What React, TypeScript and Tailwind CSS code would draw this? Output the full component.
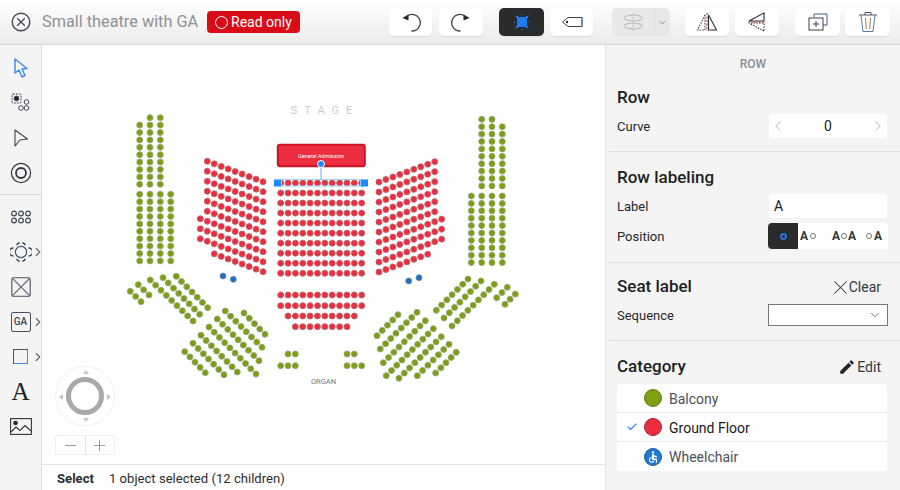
import React from 'react';
import { MdAccessible, MdEdit } from 'react-icons/md';
import { ChevronDown, ChevronLeft, ChevronRight, Check, X } from 'lucide-react';

type Pt = [number, number];

// straight line of seats between two points
const line = (x1: number, y1: number, x2: number, y2: number, n: number): Pt[] =>
  Array.from({ length: n }, (_, i) => [
    x1 + ((x2 - x1) * i) / Math.max(n - 1, 1),
    y1 + ((y2 - y1) * i) / Math.max(n - 1, 1),
  ]);

const column = (x: number, y: number, n: number) => line(x, y, x, y + 7.4 * (n - 1), n);

const greenSeats: Pt[] = [
  // left balcony
  ...column(139.7, 125.1, 9),
  ...column(150, 117.7, 10),
  ...column(160.3, 117.7, 10),
  ...column(139.7, 194.3, 10),
  ...column(150, 194.3, 10),
  ...column(160.3, 194.3, 10),
  ...column(170.7, 194.3, 10),
  // right balcony
  ...column(481.7, 119.3, 10),
  ...column(492, 119.3, 10),
  ...column(502.3, 126.7, 9),
  ...column(471.3, 196, 10),
  ...column(481.7, 196, 10),
  ...column(492, 196, 10),
  ...column(502.3, 196, 10),
  // left fan
  ...line(130.3, 291.3, 141, 301.7, 3),
  ...line(138.3, 284.7, 149, 295, 3),
  ...line(150.3, 280, 193, 321, 9),
  ...line(163, 277.7, 199.7, 314.3, 8),
  ...line(176.3, 276.3, 207.7, 307.7, 7),
  ...line(225.3, 311, 262, 347.3, 8),
  ...line(244, 313, 265, 334.3, 5),
  ...line(217.3, 319, 259, 360.7, 9),
  ...line(209, 327, 256, 374, 10),
  ...line(201, 335.3, 237.3, 372, 8),
  ...line(193, 343.3, 224, 374.7, 7),
  ...line(184.7, 351.7, 205.3, 372.7, 5),
  // right fan
  ...line(515.3, 294, 505, 304.3, 3),
  ...line(507.3, 287.3, 496.7, 297.7, 3),
  ...line(494.3, 284.3, 452, 326, 9),
  ...line(481, 281, 444, 318, 8),
  ...line(468, 279, 436.3, 310.3, 7),
  ...line(417, 312.3, 380.3, 349, 8),
  ...line(398, 314.7, 377, 335.7, 5),
  ...line(425.3, 320.7, 383.3, 362.7, 9),
  ...line(433.3, 328.7, 386.3, 375.7, 10),
  ...line(441.3, 336.7, 399, 378.3, 9),
  ...line(449, 344.3, 417.3, 375.7, 7),
  ...line(456.3, 352.3, 435.7, 373, 5),
  // by the organ
  ...line(288, 354, 295.3, 354, 2),
  ...line(280.7, 365.7, 295.3, 365.7, 3),
  ...line(347, 354, 354.3, 354, 2),
  ...line(347, 365.7, 361.7, 365.7, 3),
];

const redSeats: Pt[] = [];
// left wedge, row 7-9 have one extra seat on the outside
for (let r = 0; r < 10; r++) {
  const y = 161.3 + r * 10;
  const first = r >= 6 && r <= 8 ? -1 : r === 9 ? 1 : 0;
  for (let c = first; c < 9; c++) redSeats.push([207.3 + c * 6.97, y + c * 2.55]);
}
// right wedge
for (let r = 0; r < 10; r++) {
  const y = 161.7 + r * 10;
  const first = r >= 6 && r <= 8 ? -1 : r === 9 ? 1 : 0;
  for (let c = first; c < 9; c++) redSeats.push([434.7 - c * 6.97, y + c * 2.55]);
}
// centre block
for (let r = 0; r < 10; r++) redSeats.push(...line(280.7, 183 + r * 10.03, 361.7, 183 + r * 10.03, 12));
redSeats.push(...line(280.7, 295, 361.7, 295, 12));
redSeats.push(...line(280.7, 305.7, 361.7, 305.7, 12));
redSeats.push(...line(288, 316, 354.3, 316, 10));
redSeats.push(...line(295.3, 326.7, 347, 326.7, 8));

const blueSeats: Pt[] = [
  [223, 276],
  [233.3, 279.3],
  [408.7, 281],
  [419, 277.7],
];

const FloorPlan = () => (
  <svg viewBox="42 45 563 419" className="block w-full h-full">
    <text x="325" y="114" textAnchor="middle" fontSize="11" letterSpacing="7" fill="#c9cccf" fontFamily="Roboto, sans-serif">
      STAGE
    </text>
    <rect x="277.8" y="144.8" width="87" height="21.5" rx="2" fill="#ec2d40" stroke="#c9142a" strokeWidth="2" />
    <text x="321" y="157.5" textAnchor="middle" fontSize="5.5" fill="#fff" fontFamily="Roboto, sans-serif">
      General Admission
    </text>
    {greenSeats.map(([x, y], i) => (
      <circle key={i} cx={x} cy={y} r="3" fill="#7b9f11" stroke="#9aa67a" strokeWidth="0.9" />
    ))}
    {redSeats.map(([x, y], i) => (
      <circle key={i} cx={x} cy={y} r="3" fill="#ec2d40" stroke="#b9666e" strokeWidth="0.9" />
    ))}
    {blueSeats.map(([x, y], i) => (
      <circle key={i} cx={x} cy={y} r="3" fill="#1f6fbf" stroke="#6a8fb3" strokeWidth="0.8" />
    ))}
    {/* selection handles */}
    <rect x="281.5" y="179.5" width="79" height="6.5" fill="none" stroke="#9fd0ff" strokeWidth="1" />
    <line x1="321" y1="164" x2="321" y2="180" stroke="#5aaeff" strokeWidth="1" />
    <circle cx="321" cy="164" r="3.5" fill="#1a8cff" stroke="#fff" strokeWidth="1" />
    <rect x="274" y="179.5" width="7" height="7" fill="#1a8cff" />
    <rect x="361" y="179.5" width="7" height="7" fill="#1a8cff" />
    <text x="323.5" y="384" textAnchor="middle" fontSize="7.5" fill="#6f7480" fontFamily="Roboto, sans-serif">
      ORGAN
    </text>
  </svg>
);

const ToolButton = ({ children, className = '' }: { children: React.ReactNode; className?: string }) => (
  <div className={`h-[28px] flex items-center justify-center rounded-[5px] bg-white shadow-[0_1px_1px_rgba(0,0,0,0.08)] ${className}`}>
    {children}
  </div>
);

const UndoIcon = ({ flip = false }: { flip?: boolean }) => (
  <svg width="22" height="22" viewBox="0 0 22 22" fill="none" className={flip ? '-scale-x-100' : ''}>
    <path d="M6 6 A8.3 8.3 0 1 1 11.5 20" stroke="#3a3f46" strokeWidth="1.3" />
    <path d="M2.5 7 L8.5 3.5 L8.5 9.5 Z" fill="#23272d" />
  </svg>
);

const HeaderBar = () => (
  <header className="h-[45px] shrink-0 flex items-center border-b border-[#d8d8d8] bg-gradient-to-b from-white to-[#ebebeb]">
    <svg width="20" height="20" viewBox="0 0 20 20" fill="none" className="ml-[11px]">
      <circle cx="10" cy="10" r="8.8" stroke="#434b57" strokeWidth="1.4" />
      <path d="M6.2 6.2 L13.8 13.8 M13.8 6.2 L6.2 13.8" stroke="#434b57" strokeWidth="1.3" />
    </svg>
    <span className="ml-[11px] pt-px text-[16.3px] text-[#8f9296] w-[165px] whitespace-nowrap">Small theatre with GA</span>
    <div className="w-[93px] h-[22px] flex items-center gap-[3px] pl-[8px] rounded-[4px] bg-[#d90b16] text-white text-[14px]">
      <span className="w-[13px] h-[13px] rounded-full border border-white" />
      <span>Read only</span>
    </div>
    <ToolButton className="ml-[89px] w-[43px]">
      <UndoIcon />
    </ToolButton>
    <ToolButton className="ml-[7px] w-[44px]">
      <UndoIcon flip />
    </ToolButton>
    <ToolButton className="ml-[16px] w-[45px] !bg-[#2a2b2d]">
      <svg width="18" height="18" viewBox="0 0 18 18">
        <rect x="4" y="4" width="10" height="10" fill="#1a7cf0" />
        <path d="M3 3h2v2H3zM13 3h2v2h-2zM3 13h2v2H3zM13 13h2v2h-2z" fill="#1a7cf0" />
        <path d="M1.5 1.5h1v1h-1zM15.5 1.5h1v1h-1zM1.5 15.5h1v1h-1zM15.5 15.5h1v1h-1zM8 1h2v1H8zM8 16h2v1H8zM1 8h1v2H1zM16 8h1v2h-1z" fill="#1a7cf0" opacity="0.7" />
      </svg>
    </ToolButton>
    <ToolButton className="ml-[6px] w-[43px]">
      <svg width="22" height="14" viewBox="0 0 22 14" fill="none">
        <path d="M21 2.5 H7 L1.5 7 L7 11.5 H21 Z" stroke="#3a3f46" strokeWidth="1" />
        <path d="M21 2.5 V11.5" stroke="#2a7de0" strokeWidth="1" />
        <circle cx="6" cy="7" r="1.2" fill="#23272d" />
      </svg>
    </ToolButton>
    <div className="ml-[19px] w-[58px] h-[28px] flex rounded-[5px] bg-[#e8e8e8]">
      <div className="w-[43px] flex items-center justify-center border-r border-[#dcdcdc]">
        <svg width="22" height="20" viewBox="0 0 22 20" fill="none" stroke="#c2c2c2" strokeWidth="1.2">
          <ellipse cx="11" cy="6" rx="9" ry="2.8" />
          <ellipse cx="11" cy="14" rx="9" ry="2.8" />
          <path d="M11 1 V19" strokeDasharray="2 2" />
        </svg>
      </div>
      <div className="flex-1 flex items-center justify-center">
        <ChevronDown size={11} color="#b0b0b0" strokeWidth={2.5} />
      </div>
    </div>
    <ToolButton className="ml-[15px] w-[44px]">
      <svg width="22" height="20" viewBox="0 0 22 20" fill="none" stroke="#2c3036" strokeWidth="1.1">
        <path d="M9 3 L1.5 18 H9 Z" strokeDasharray="1.5 1.2" stroke="#4a3236" />
        <path d="M12.5 3 L20.5 18 H12.5 Z" />
        <path d="M11 1 V19" stroke="#a03a34" strokeDasharray="2 1.5" />
      </svg>
    </ToolButton>
    <ToolButton className="ml-[6px] w-[44px]">
      <svg width="20" height="22" viewBox="0 0 20 22" fill="none" stroke="#2c3036" strokeWidth="1.1">
        <path d="M17 2 L2 10 H17 Z" />
        <path d="M17 20 L2 12 H17 Z" strokeDasharray="1.5 1.2" stroke="#4a3236" />
        <path d="M1 11 H19" stroke="#a03a34" strokeDasharray="2 1.5" />
      </svg>
    </ToolButton>
    <ToolButton className="ml-[16px] w-[45px]">
      <svg width="20" height="18" viewBox="0 0 20 18" fill="none" stroke="#3a3f46" strokeWidth="1">
        <path d="M6 4 V1 H19 V12 H15" stroke="#3f5a78" />
        <rect x="1" y="5" width="14" height="12" />
        <path d="M8 8 V14 M5 11 H11" />
      </svg>
    </ToolButton>
    <ToolButton className="ml-[5px] w-[45px]">
      <svg width="20" height="22" viewBox="0 0 20 22" fill="none" stroke="#4a5563" strokeWidth="1">
        <path d="M1 4 H19 M7 4 V1.5 H13 V4" />
        <path d="M3 4 L5 20.5 H15 L17 4" stroke="#5b7ea3" />
        <path d="M7.5 7 L8.3 18 M12.5 7 L11.7 18" stroke="#a8794a" />
      </svg>
    </ToolButton>
  </header>
);

const SideItem = ({ children, more = false }: { children: React.ReactNode; more?: boolean }) => (
  <div className="relative h-[35px] flex items-center justify-center">
    {children}
    {more && <ChevronRight size={14} color="#66686c" strokeWidth={2} className="absolute left-[30.5px] top-[10.5px]" />}
  </div>
);

const Sidebar = () => (
  <aside className="w-[42px] shrink-0 bg-[#f4f4f4] border-r border-[#dedede] pt-[5px]">
    <SideItem>
      <svg width="18" height="22" viewBox="0 0 18 22" fill="none" stroke="#3d8bf2" strokeWidth="1.4">
        <path d="M3 2 V16 L7 13 L10 20 L13 18.5 L10 12 L15 11.5 Z" strokeLinejoin="round" />
      </svg>
    </SideItem>
    <SideItem>
      <svg width="20" height="20" viewBox="0 0 20 20" fill="none" stroke="#444b55" strokeWidth="1">
        <rect x="1" y="1" width="9" height="9" rx="1" strokeDasharray="2 1" />
        <circle cx="5.5" cy="5.5" r="2.4" fill="#23272d" />
        <circle cx="15.5" cy="9" r="2.3" />
        <circle cx="10" cy="15" r="2.3" />
        <circle cx="15.5" cy="15" r="2.3" />
      </svg>
    </SideItem>
    <SideItem>
      <svg width="16" height="18" viewBox="0 0 16 18" fill="none" stroke="#3f454e" strokeWidth="1.1">
        <path d="M2 1 L14.5 10 L7 11 L2 17 Z" strokeLinejoin="round" />
      </svg>
    </SideItem>
    <SideItem>
      <svg width="22" height="22" viewBox="0 0 22 22" fill="none" stroke="#33383f">
        <circle cx="11" cy="11" r="9.6" strokeWidth="1.2" />
        <circle cx="11" cy="11" r="5" strokeWidth="1.8" />
      </svg>
    </SideItem>
    <div className="mt-[4px] mb-[4px] border-t border-[#d9d9d9]" />
    <SideItem>
      <svg width="20" height="14" viewBox="0 0 20 14" fill="none" stroke="#444b55" strokeWidth="1.2">
        {[3, 10, 17].map((x) => (
          <React.Fragment key={x}>
            <circle cx={x} cy="3.5" r="2.4" />
            <circle cx={x} cy="10.5" r="2.4" />
          </React.Fragment>
        ))}
      </svg>
    </SideItem>
    <SideItem more>
      <svg width="22" height="20" viewBox="0 0 22 20" fill="none" stroke="#33383f" strokeWidth="1.2">
        <circle cx="11" cy="10" r="5.6" stroke="#3e5670" />
        <path d="M7 3.2 A2.2 2.2 0 0 1 9.6 1 M15 3.2 A2.2 2.2 0 0 0 12.4 1 M7 16.8 A2.2 2.2 0 0 0 9.6 19 M15 16.8 A2.2 2.2 0 0 1 12.4 19" strokeWidth="1.4" />
        <path d="M3.4 6 A2.8 2.8 0 0 0 3.4 14 M18.6 6 A2.8 2.8 0 0 1 18.6 14" strokeWidth="1.4" />
      </svg>
    </SideItem>
    <SideItem>
      <svg width="20" height="20" viewBox="0 0 20 20" fill="none" stroke="#4a4f5a" strokeWidth="1.1">
        <rect x="0.8" y="0.8" width="18.4" height="18.4" rx="2" />
        <path d="M1 1 L19 19 M19 1 L1 19" stroke="#6b7078" />
      </svg>
    </SideItem>
    <SideItem more>
      <div className="w-[20px] h-[20px] rounded-[2px] border border-[#4a4f5a] flex items-center justify-center text-[10px] font-medium text-[#3f454e]">
        GA
      </div>
    </SideItem>
    <SideItem more>
      <div className="w-[15px] h-[15px] border border-[#4a4f5a] border-r-[#3d8bf2] border-b-[#3d8bf2]" />
    </SideItem>
    <SideItem>
      <span className="font-['Liberation_Serif',serif] text-[25px] leading-none text-[#1c1f24]">A</span>
    </SideItem>
    <SideItem>
      <svg width="22" height="18" viewBox="0 0 22 18" fill="none" stroke="#2f343b" strokeWidth="1.1">
        <rect x="0.6" y="0.6" width="20.8" height="15.8" />
        <circle cx="5.5" cy="5" r="1.8" fill="#23272d" />
        <path d="M1 14 L6 9 L10 12.5 L15 7.5 L21 13" />
      </svg>
    </SideItem>
  </aside>
);

const Compass = () => (
  <div className="absolute left-[13px] bottom-[9px] w-[60px]">
    <div className="relative w-[60px] h-[60px] rounded-full bg-white border border-[#f1f1f1] flex items-center justify-center">
      <div className="w-[38px] h-[38px] rounded-full border-[5px] border-[#a9a9a9] bg-white" />
      <span className="absolute top-[3px] left-[27px] border-x-[3px] border-x-transparent border-b-[4px] border-b-[#c4c4c4]" />
      <span className="absolute bottom-[3px] left-[27px] border-x-[3px] border-x-transparent border-t-[4px] border-t-[#c4c4c4]" />
      <span className="absolute left-[3px] top-[27px] border-y-[3px] border-y-transparent border-r-[4px] border-r-[#c4c4c4]" />
      <span className="absolute right-[3px] top-[27px] border-y-[3px] border-y-transparent border-l-[4px] border-l-[#c4c4c4]" />
    </div>
    <div className="mt-[9px] h-[20px] flex border border-[#efefef] rounded-[2px] bg-white text-[#9a9a9a]">
      <div className="flex-1 flex items-center justify-center border-r border-[#e2e2e2]">
        <span className="w-[11px] border-t border-[#9a9a9a]" />
      </div>
      <div className="flex-1 relative flex items-center justify-center">
        <span className="w-[11px] border-t border-[#9a9a9a]" />
        <span className="absolute h-[11px] border-l border-[#9a9a9a]" />
      </div>
    </div>
  </div>
);

const Heading = ({ title, action }: { title: string; action?: React.ReactNode }) => (
  <div className="h-[28px] pt-[2px] flex items-center justify-between">
    <span className="text-[17px] font-medium text-[#1d1f23]">{title}</span>
    {action}
  </div>
);

const Field = ({ label, children, className = '' }: { label: string; children: React.ReactNode; className?: string }) => (
  <div className={`flex items-center justify-between ${className}`}>
    <span className="pt-[2px] text-[13px] text-[#25272b]">{label}</span>
    {children}
  </div>
);

const Dot = () => <span className="inline-block w-[6px] h-[6px] rounded-full border border-[#777]" />;

const PositionPicker = () => (
  <div className="w-[120px] h-[26px] flex rounded-[4px] bg-white overflow-hidden text-[12px] font-bold text-[#33363b] -mr-px">
    <div className="w-[30px] flex items-center justify-center bg-[#2a2b2d]">
      <span className="w-[7px] h-[7px] rounded-full border-2 border-[#2a72d8]" />
    </div>
    <div className="w-[30px] flex items-center justify-start pl-[2px] gap-[2px]">
      A<Dot />
    </div>
    <div className="w-[32px] flex items-center justify-center gap-[1px]">
      A<Dot />A
    </div>
    <div className="w-[28px] flex items-center justify-center gap-[2px]">
      <Dot />A
    </div>
  </div>
);

const CategoryRow = ({ name, checked = false, border = true, children }: { name: string; checked?: boolean; border?: boolean; children: React.ReactNode }) => (
  <div className={`h-[29px] flex items-center ${border ? 'border-b border-[#ececec]' : ''}`}>
    <div className="w-[27px] flex justify-center pl-[3px]">{checked && <Check size={12} color="#2f86f5" strokeWidth={2.2} />}</div>
    {children}
    <span className={`ml-[7px] pt-[2px] text-[14px] ${checked ? 'text-[#17191c]' : 'text-[#4c5058]'}`}>{name}</span>
  </div>
);

const PropertiesPanel = () => (
  <aside className="w-[295px] shrink-0 bg-[#f4f4f4] border-l border-[#e3e3e3]">
    <div className="h-[36px] pt-[2px] flex items-center justify-center text-[12px] font-medium text-[#8b8d91]">ROW</div>

    <section className="h-[71px] ml-[3px] pl-[8px] pr-[13px] pt-[2px] border-b border-[#dedede]">
      <Heading title="Row" />
      <Field label="Curve" className="mt-[3px]">
        <div className="w-[118px] h-[24px] flex items-center justify-between px-[1px] rounded-[3px] bg-white">
          <ChevronLeft size={16} color="#d4d4d4" />
          <span className="text-[14px] text-[#222]">0</span>
          <ChevronRight size={16} color="#d4d4d4" />
        </div>
      </Field>
    </section>

    <section className="h-[111px] ml-[3px] pl-[8px] pr-[13px] pt-[11px] border-b border-[#dedede]">
      <Heading title="Row labeling" />
      <Field label="Label" className="mt-[3px]">
        <div className="w-[118px] h-[24px] flex items-center pl-[5px] rounded-[3px] bg-white text-[14px] text-[#222]">A</div>
      </Field>
      <Field label="Position" className="mt-[5px]">
        <PositionPicker />
      </Field>
    </section>

    <section className="h-[78px] ml-[3px] pl-[8px] pr-[13px] pt-[9px] border-b border-[#dedede]">
      <Heading
        title="Seat label"
        action={
          <span className="flex items-center pr-[6px] text-[14px] text-[#33363b]">
            <X size={23} strokeWidth={1.1} color="#33363b" className="-mr-[3px]" />
            Clear
          </span>
        }
      />
      <Field label="Sequence" className="mt-[4px]">
        <div className="w-[120px] h-[22px] flex items-center justify-end pr-[5px] border border-[#777] bg-white -mr-px">
          <ChevronDown size={14} color="#666" strokeWidth={1.5} />
        </div>
      </Field>
    </section>

    <section className="ml-[3px] pl-[8px] pr-[13px] pt-[11px]">
      <Heading
        title="Category"
        action={
          <span className="flex items-center gap-[1px] pr-[6px] text-[14px] text-[#33363b]">
            <MdEdit size={18} color="#23262b" />
            Edit
          </span>
        }
      />
      <div className="mt-[4px] rounded-[3px] bg-white">
        <CategoryRow name="Balcony">
          <span className="w-[18px] h-[18px] rounded-full bg-[#7f9f12] border border-[#5f7a10]" />
        </CategoryRow>
        <CategoryRow name="Ground Floor" checked>
          <span className="w-[18px] h-[18px] rounded-full bg-[#ec2d40] border border-[#a9202f]" />
        </CategoryRow>
        <CategoryRow name="Wheelchair" border={false}>
          <span className="w-[18px] h-[18px] flex items-center justify-center rounded-full bg-[#1f78d1] border border-[#1a5fa5]">
            <MdAccessible size={14} color="#fff" />
          </span>
        </CategoryRow>
      </div>
    </section>
  </aside>
);

const App: React.FC = () => {
  return (
    <div className="w-[900px] h-[490px] flex flex-col overflow-hidden bg-white font-['Roboto',sans-serif]">
      <HeaderBar />
      <div className="flex-1 flex min-h-0">
        <Sidebar />
        <main className="flex-1 min-w-0 flex flex-col">
          <div className="relative flex-1 min-h-0">
            <FloorPlan />
            <Compass />
          </div>
          <footer className="h-[26px] shrink-0 flex items-center pl-[15px] pt-[2px] border-t border-[#e4e4e4] text-[13.1px] text-[#2b2d31]">
            <span className="w-[52px] font-bold">Select</span>
            <span>1 object selected (12 children)</span>
          </footer>
        </main>
        <PropertiesPanel />
      </div>
    </div>
  );
};

export default App;
